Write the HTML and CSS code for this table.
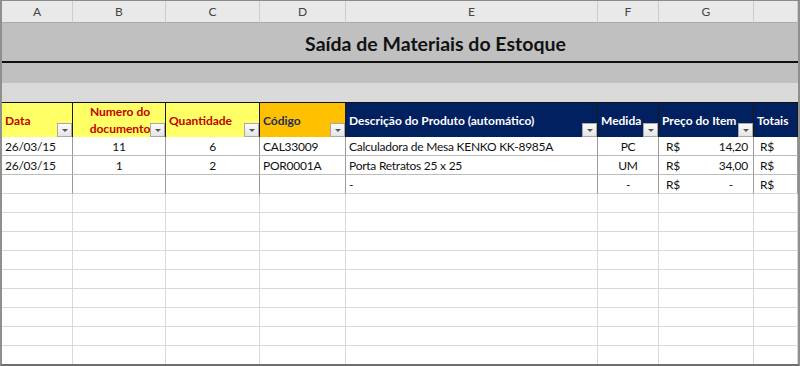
FILE: index.html
```html
<!DOCTYPE html>
<html lang="pt">
<head>
<meta charset="utf-8">
<title>Saída de Materiais do Estoque</title>
<link rel="stylesheet" href="styles.css">
</head>
<body>
<div class="sheet">
  <div class="row colhead">
    <div class="ch">A</div><div class="ch">B</div><div class="ch">C</div><div class="ch">D</div>
    <div class="ch">E</div><div class="ch">F</div><div class="ch">G</div><div class="ch"></div>
  </div>
  <div class="row title">
    <div class="title-pad"></div>
    <div class="title-text">Saída de Materiais do Estoque</div>
  </div>
  <div class="band band-dark"></div>
  <div class="band band-light"></div>
  <div class="row thead">
    <div class="th yellow">Data<span class="filter"></span></div>
    <div class="th yellow center two">Numero do<br>documento<span class="filter"></span></div>
    <div class="th yellow">Quantidade<span class="filter"></span></div>
    <div class="th orange">Código<span class="filter"></span></div>
    <div class="th navy">Descrição do Produto (automático)<span class="filter"></span></div>
    <div class="th navy">Medida<span class="filter"></span></div>
    <div class="th navy">Preço do Item<span class="filter"></span></div>
    <div class="th navy">Totais</div>
  </div>
  <div class="row data">
    <div class="td">26/03/15</div><div class="td center">11</div><div class="td center">6</div>
    <div class="td">CAL33009</div><div class="td">Calculadora de Mesa KENKO KK-8985A</div>
    <div class="td center">PC</div><div class="td money"><span>R$</span><span>14,20</span></div><div class="td">R$</div>
  </div>
  <div class="row data">
    <div class="td">26/03/15</div><div class="td center">1</div><div class="td center">2</div>
    <div class="td">POR0001A</div><div class="td">Porta Retratos 25 x 25</div>
    <div class="td center">UM</div><div class="td money"><span>R$</span><span>34,00</span></div><div class="td">R$</div>
  </div>
  <div class="row data last">
    <div class="td"></div><div class="td"></div><div class="td"></div>
    <div class="td"></div><div class="td">-</div>
    <div class="td center">-</div><div class="td money"><span>R$</span><span class="dash">-</span></div><div class="td">R$</div>
  </div>
  <div class="row empty"><div class="c"></div><div class="c"></div><div class="c"></div><div class="c"></div><div class="c"></div><div class="c"></div><div class="c"></div><div class="c"></div></div>
  <div class="row empty"><div class="c"></div><div class="c"></div><div class="c"></div><div class="c"></div><div class="c"></div><div class="c"></div><div class="c"></div><div class="c"></div></div>
  <div class="row empty"><div class="c"></div><div class="c"></div><div class="c"></div><div class="c"></div><div class="c"></div><div class="c"></div><div class="c"></div><div class="c"></div></div>
  <div class="row empty"><div class="c"></div><div class="c"></div><div class="c"></div><div class="c"></div><div class="c"></div><div class="c"></div><div class="c"></div><div class="c"></div></div>
  <div class="row empty"><div class="c"></div><div class="c"></div><div class="c"></div><div class="c"></div><div class="c"></div><div class="c"></div><div class="c"></div><div class="c"></div></div>
  <div class="row empty"><div class="c"></div><div class="c"></div><div class="c"></div><div class="c"></div><div class="c"></div><div class="c"></div><div class="c"></div><div class="c"></div></div>
  <div class="row empty"><div class="c"></div><div class="c"></div><div class="c"></div><div class="c"></div><div class="c"></div><div class="c"></div><div class="c"></div><div class="c"></div></div>
  <div class="row empty"><div class="c"></div><div class="c"></div><div class="c"></div><div class="c"></div><div class="c"></div><div class="c"></div><div class="c"></div><div class="c"></div></div>
  <div class="row empty"><div class="c"></div><div class="c"></div><div class="c"></div><div class="c"></div><div class="c"></div><div class="c"></div><div class="c"></div><div class="c"></div></div>
  <span class="sel sel-left"></span>
  <span class="sel sel-right"></span>
</div>
</body>
</html>
```

FILE: styles.css
```css
html, body {
  margin: 0;
  padding: 0;
  background: #ffffff;
}

.sheet {
  position: relative;
  box-sizing: border-box;
  width: 800px;
  height: 366px;
  overflow: hidden;
  border-top: 1px solid #8a8a8a;
  border-left: 2px solid #8f8f8f;
  border-right: 2px solid #8f8f8f;
  border-bottom: 2px solid #6e6e6e;
  font-family: Lato, "Liberation Sans", sans-serif;
  color: #111111;
  background: #ffffff;
}

.row {
  display: grid;
  grid-template-columns: 71px 93px 94px 86px 252px 61px 95px 44px;
}

/* column letters */
.ch {
  box-sizing: border-box;
  height: 22px;
  background: #e9e9e9;
  border-right: 1px solid #cdcdcd;
  border-bottom: 1px solid #ababab;
  text-align: center;
  font-size: 12px;
  line-height: 22px;
  color: #444444;
}

/* title */
.title {
  grid-template-columns: 71px 1fr;
  box-sizing: border-box;
  height: 40px;
  background: #c0c0c0;
  border-bottom: 2px solid #111111;
}
.title-text {
  text-align: center;
  font-weight: 700;
  font-size: 19.5px;
  line-height: 34px;
  padding-top: 4px;
  color: #111111;
}

.band {
  box-sizing: border-box;
}
.band-dark {
  height: 20px;
  background: #c0c0c0;
}
.band-light {
  height: 19px;
  background: #dadada;
}

/* table header */
.thead {
  box-sizing: border-box;
  height: 35px;
  border-top: 1px solid #111111;
  border-bottom: 1px solid #555555;
}
.th {
  position: relative;
  box-sizing: border-box;
  display: flex;
  align-items: center;
  padding: 0 3px;
  font-weight: 700;
  font-size: 12px;
  line-height: 17px;
  white-space: nowrap;
  border-right: 1px solid #1a1a1a;
}
.th.center {
  justify-content: center;
  text-align: center;
  padding-right: 1px;
}
.yellow {
  background: #ffff66;
  color: #c00000;
}
.orange {
  background: #ffc000;
  color: #1c2f5c;
}
.navy {
  background: #002060;
  color: #ffffff;
}

.filter {
  position: absolute;
  right: 0;
  bottom: 0;
  box-sizing: border-box;
  width: 15px;
  height: 14px;
  border: 1px solid #a9a9a9;
  background: linear-gradient(#fbfbfb, #e4e4e4);
}
.filter::after {
  content: "";
  position: absolute;
  left: 4px;
  top: 5px;
  border-left: 3px solid transparent;
  border-right: 3px solid transparent;
  border-top: 3px solid #555555;
}

/* data rows */
.td {
  box-sizing: border-box;
  height: 19px;
  padding: 0 3px;
  font-size: 12px;
  letter-spacing: -0.25px;
  line-height: 19px;
  white-space: nowrap;
  overflow: hidden;
  border-right: 1px solid #9c9c9c;
  border-bottom: 1px solid #bdbdbd;
}
.data.last .td {
  border-bottom-color: #d4d4d4;
}
.td.center {
  text-align: center;
}
.td.money {
  display: flex;
  justify-content: space-between;
  padding-left: 7px;
  padding-right: 5px;
}
.td.money .dash {
  padding-right: 15px;
}
.data .td:last-child {
  padding-left: 6px;
}

/* empty grid */
.c {
  box-sizing: border-box;
  height: 19px;
  border-right: 1px solid #d9d9d9;
  border-bottom: 1px solid #d9d9d9;
}

/* selection markers over the sheet border */
.sel {
  position: absolute;
  top: 287px;
  width: 2px;
  height: 19px;
  background: #217346;
}
.sel-left {
  left: -2px;
}
.sel-right {
  right: -2px;
}
```
